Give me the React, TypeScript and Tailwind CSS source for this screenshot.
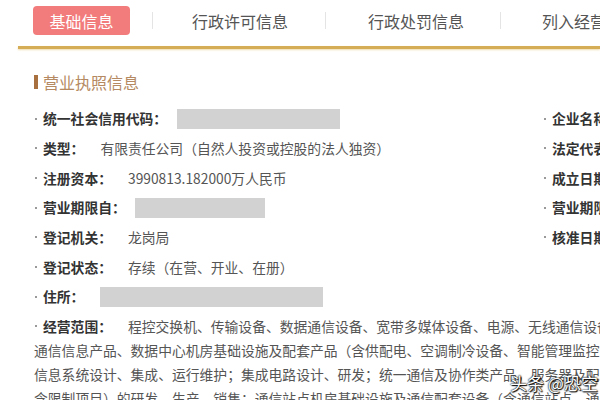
const LEFT_ROWS = [
  { label: "统一社会信用代码：", gap: "ml-[10px]", bar: "w-[163px]" },
  { label: "类型：", gap: "ml-[16px]", value: "有限责任公司（自然人投资或控股的法人独资）" },
  { label: "注册资本：", gap: "ml-[16px]", value: "3990813.182000万人民币" },
  { label: "营业期限自：", gap: "ml-[9px]", bar: "w-[130px]" },
  { label: "登记机关：", gap: "ml-[16px]", value: "龙岗局" },
  { label: "登记状态：", gap: "ml-[16px]", value: "存续（在营、开业、在册）" },
  { label: "住所：", gap: "ml-[16px]", bar: "w-[223px]" },
];

const RIGHT_ROWS = ["企业名称：", "法定代表人：", "成立日期：", "营业期限至：", "核准日期："];

const SCOPE_LINES = [
  "通信信息产品、数据中心机房基础设施及配套产品（含供配电、空调制冷设备、智能管理监控等）的开发、生产、销售",
  "信息系统设计、集成、运行维护；集成电路设计、研发；统一通信及协作类产品，服务器及配套软硬件产品",
  "含限制项目）的研发、生产、销售；通信站点机房基础设施及通信配套设备（含通信站点、通信机房、通信电源",
];

const Bullet = () => (
  <span className="w-[9px] shrink-0 flex items-center">
    <span className="ml-[1px] w-[2px] h-[2px] rounded-full bg-[#777]" />
  </span>
);

const App = () => {
  return (
    <div className="relative w-[600px] h-[400px] overflow-hidden bg-white font-['Noto_Sans_CJK_SC',sans-serif] text-[13.8px]">
      {/* tabs */}
      <div className="flex items-center h-[41px] whitespace-nowrap text-[16px] text-[#555]">
        <div className="ml-[33px] w-[97px] h-[29px] shrink-0 rounded bg-[#f27b7b] text-white flex items-center justify-center">
          基础信息
        </div>
        <div className="ml-[22px] w-px h-[17px] shrink-0 bg-[#e4e4e4]" />
        <div className="ml-[39px] shrink-0">行政许可信息</div>
        <div className="ml-[37px] w-px h-[17px] shrink-0 bg-[#e4e4e4]" />
        <div className="ml-[42px] shrink-0">行政处罚信息</div>
        <div className="ml-[36px] w-px h-[17px] shrink-0 bg-[#e4e4e4]" />
        <div className="ml-[41px] shrink-0">列入经营异常名录信息</div>
      </div>
      <div className="mt-[5px] ml-[18px] h-[3px] bg-[#d5ad57] shadow-[0_1px_2px_#f0dcae]" />

      {/* section title */}
      <div className="mt-[22px] ml-[34px] flex items-center h-[22px]">
        <div className="w-[4px] h-[14px] bg-[#a9703f]" />
        <span className="ml-[5px] text-[16px] text-[#b58a62]">营业执照信息</span>
      </div>

      {/* info rows */}
      <div className="mt-[11px] ml-[34px]">
        {LEFT_ROWS.map((row, i) => (
          <div key={row.label} className="flex items-center h-[29.67px] whitespace-nowrap">
            <div className="w-[509px] shrink-0 flex items-center">
              <Bullet />
              <span className="font-bold text-[#333]">{row.label}</span>
              {row.bar ? (
                <div className={`${row.gap} ${row.bar} h-[20px] bg-[#d2d2d2]`} />
              ) : (
                <span className={`${row.gap} text-[#555]`}>{row.value}</span>
              )}
            </div>
            {RIGHT_ROWS[i] && (
              <div className="flex items-center">
                <Bullet />
                <span className="font-bold text-[#333]">{RIGHT_ROWS[i]}</span>
              </div>
            )}
          </div>
        ))}

        {/* business scope */}
        <div className="mt-[2px] whitespace-nowrap leading-[24px] text-[#555]">
          <div className="flex items-center h-[24px]">
            <Bullet />
            <span className="font-bold text-[#333]">经营范围：</span>
            <span className="ml-[16px]">
              程控交换机、传输设备、数据通信设备、宽带多媒体设备、电源、无线通信设备、微电子产品、软件
            </span>
          </div>
          {SCOPE_LINES.map((line) => (
            <div key={line} className="h-[24px]">
              {line}
            </div>
          ))}
        </div>
      </div>

      {/* watermark */}
      <div className="absolute left-[510px] top-[370px] text-[17px] text-white whitespace-nowrap [text-shadow:0_0_1px_#000,0_0_2px_#000,1px_1px_1px_#000]">
        头条 @恐空
      </div>
    </div>
  );
};

export default App;
